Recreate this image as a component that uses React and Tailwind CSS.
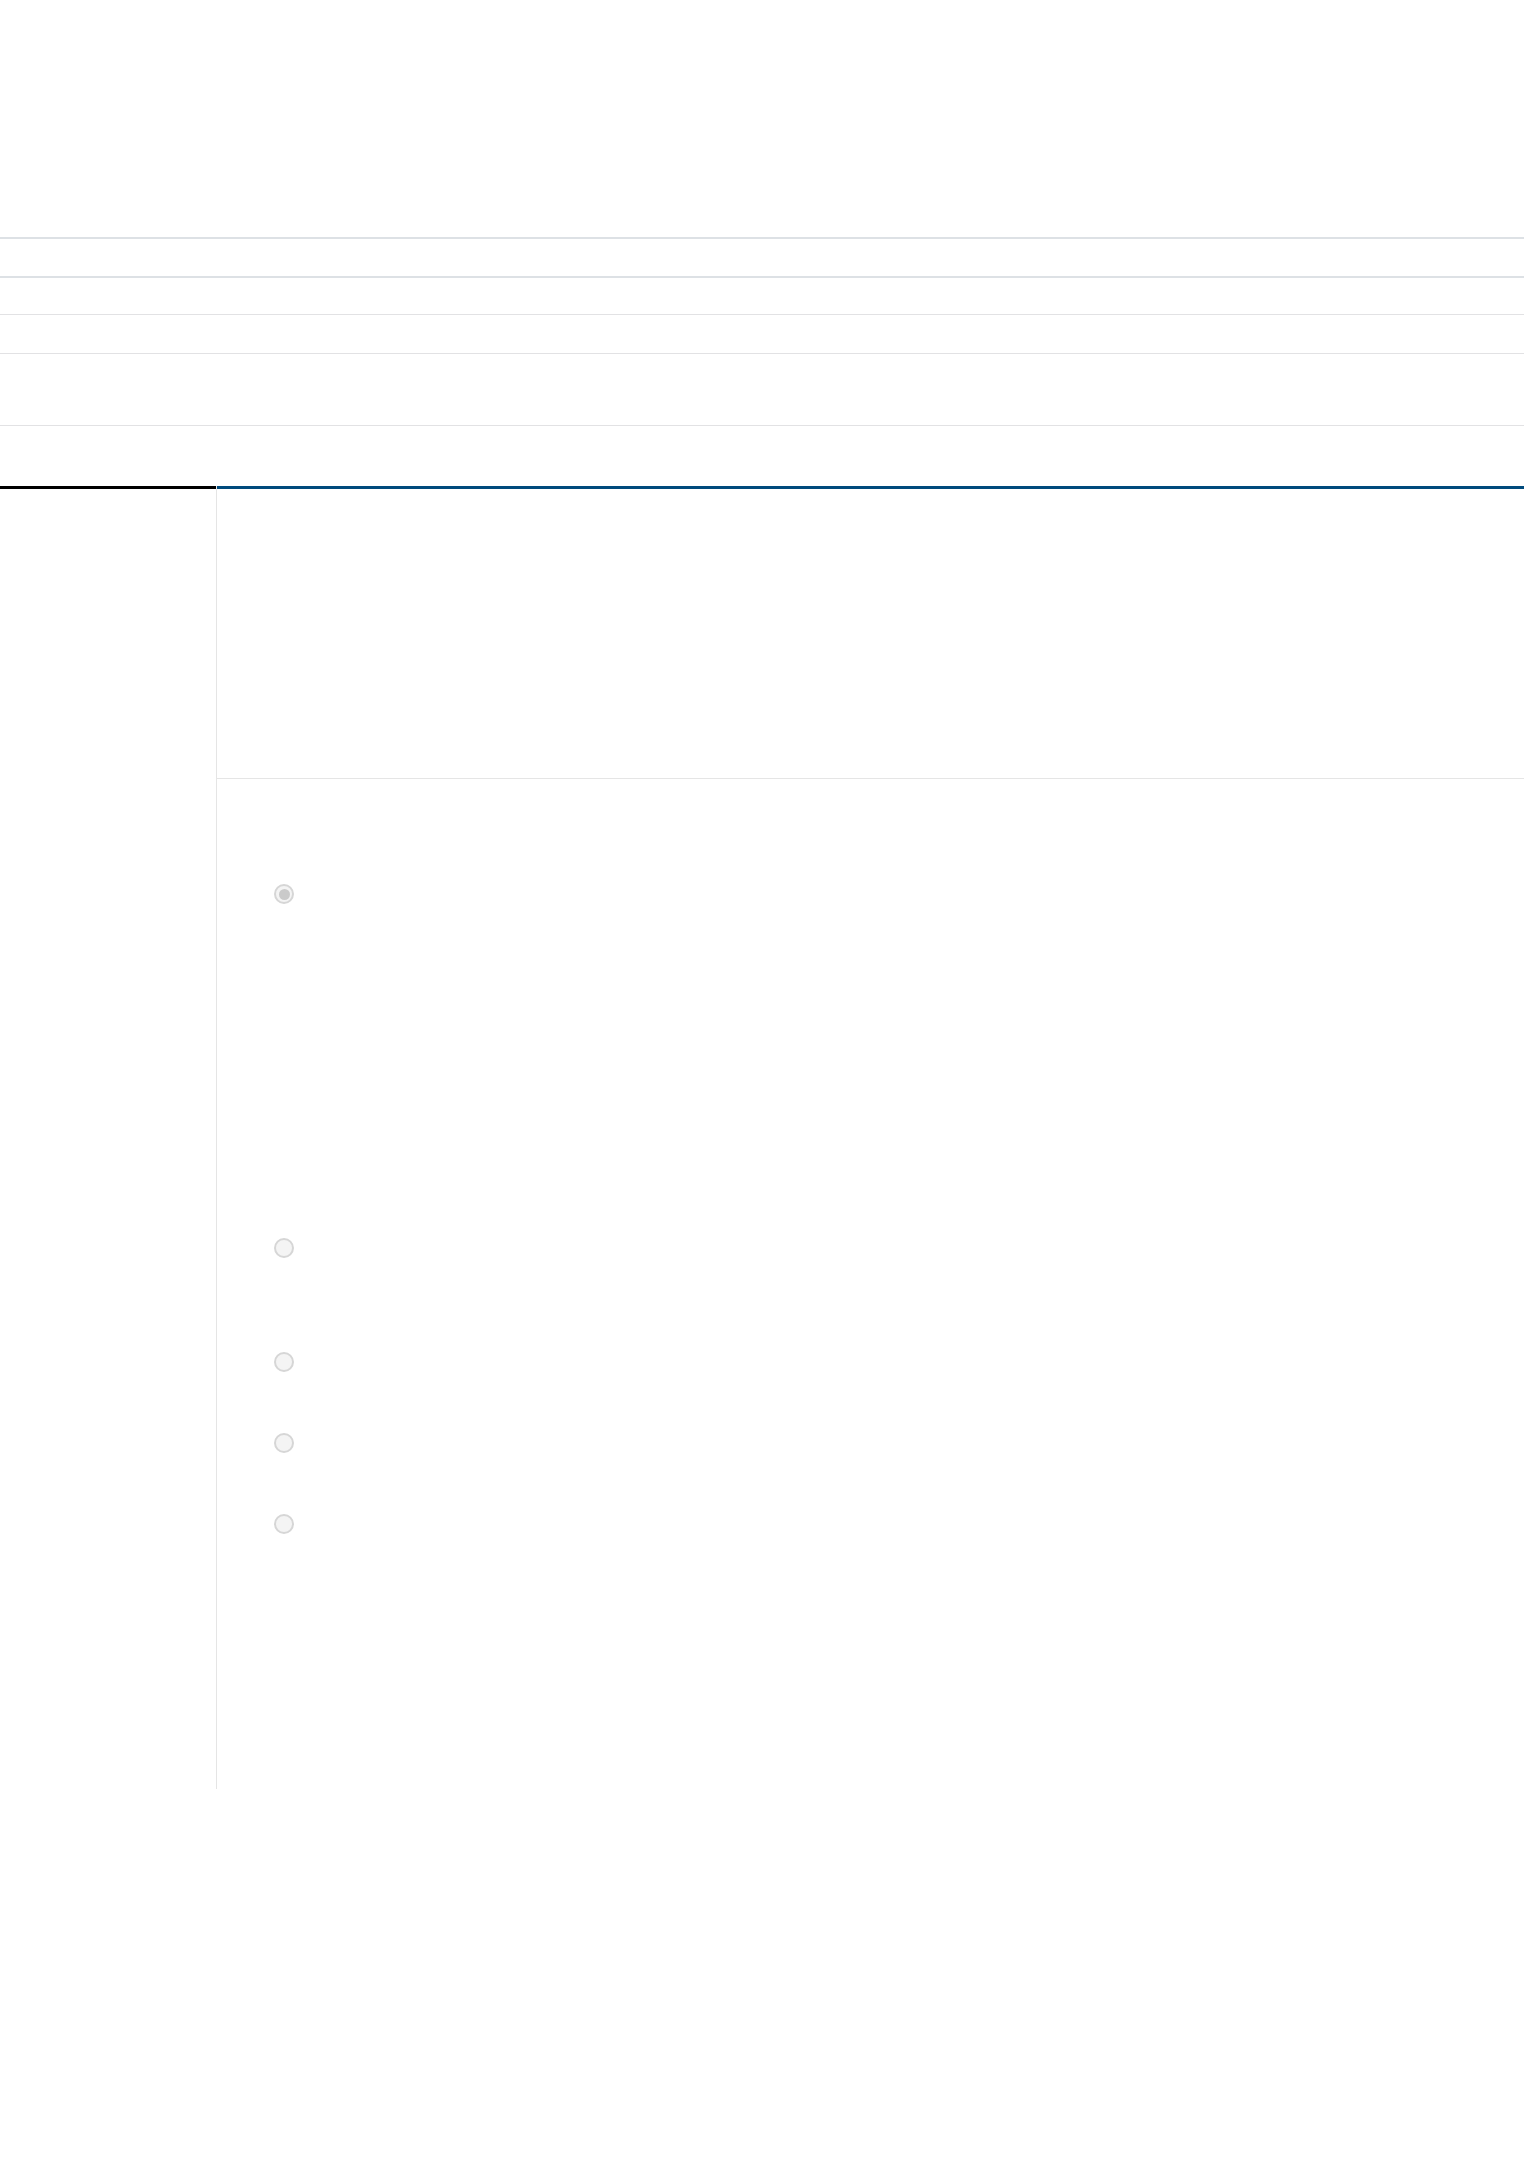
export default function App() {
  const options = [
    { checked: true, gap: 'mt-[105px]' },
    { checked: false, gap: 'mt-[334px]' },
    { checked: false, gap: 'mt-[94px]' },
    { checked: false, gap: 'mt-[61px]' },
    { checked: false, gap: 'mt-[61px]' },
  ];

  return (
    <div className="min-h-[2181px] bg-white font-['Liberation_Sans',sans-serif]">
      {/* Header rows */}
      <div className="h-[237px]" />
      <div className="h-[39px] border-t-2 border-[#dde1e5]" />
      <div className="h-[38px] border-t-2 border-[#dde1e5]" />
      <div className="h-[39px] border-t border-[#e2e2e4]" />
      <div className="h-[72px] border-t border-[#e2e2e4]" />
      <div className="h-[61px] border-t border-[#e2e2e4]" />

      {/* Main area */}
      <div className="flex">
        <div className="w-[216px] shrink-0">
          <div className="h-[3px] bg-black" />
        </div>
        <div className="flex-1 h-[1303px] border-l border-[#e5e5e5]">
          <div className="h-[3px] bg-[#004a7c]" />
          <div className="h-[290px] border-b border-[#e5e5e5]" />
          <div className="pl-[57px]">
            {options.map((o, i) => (
              <label key={i} className={`flex items-center gap-3 ${o.gap}`}>
                <span className="w-[20px] h-[20px] rounded-full border-2 border-[#d6d6d6] bg-[#f4f4f4] flex items-center justify-center">
                  {o.checked && <span className="w-[11px] h-[11px] rounded-full bg-[#cacaca]" />}
                </span>
              </label>
            ))}
          </div>
        </div>
      </div>
    </div>
  );
}
